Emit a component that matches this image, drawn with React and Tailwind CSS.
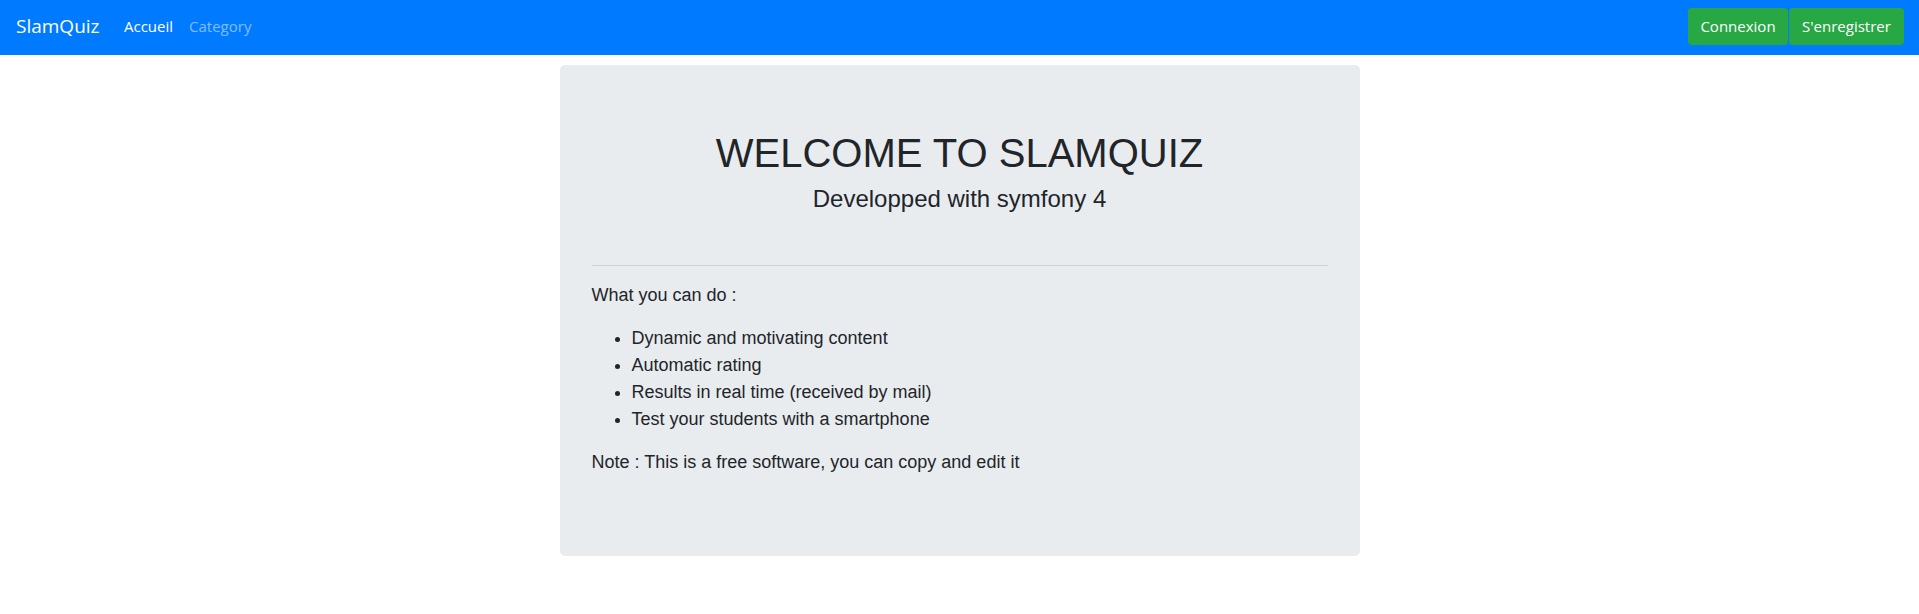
import React from "react";

const features = [
  "Dynamic and motivating content",
  "Automatic rating",
  "Results in real time (received by mail)",
  "Test your students with a smartphone",
];

const App = () => {
  return (
    <div className="min-h-[614px] bg-white text-[#212529] font-['Liberation_Sans',Arial,sans-serif]">
      <nav className="h-[55px] bg-[#007bff] flex items-start pl-4 pr-[15px] pt-2 font-['Segoe_UI','Open_Sans',sans-serif]">
        <a className="w-[100px] h-[37px] flex items-center text-[19px] text-white whitespace-nowrap">
          SlamQuiz
        </a>
        <div className="flex h-[37px] items-center text-[15px]">
          <a className="px-2 text-white">Accueil</a>
          <a className="px-2 text-white/50">Category</a>
        </div>
        <div className="ml-auto flex gap-px">
          <button className="w-[100px] h-[37px] rounded bg-[#28a745] text-white text-[15px]">
            Connexion
          </button>
          <button className="w-[115px] h-[37px] rounded bg-[#28a745] text-white text-[15px]">
            S'enregistrer
          </button>
        </div>
      </nav>

      <div className="w-[800px] mx-auto mt-[10px] bg-[#e9ecef] rounded-[5px] px-8 py-16">
        <h1 className="text-center text-[40px] leading-[1.2] mb-2">
          WELCOME TO SLAMQUIZ
        </h1>
        <h4 className="text-center text-[24px] leading-[1.2] mb-2">
          Developped with symfony 4
        </h4>
        <hr className="mt-[51px] mb-4 border-t border-[#d1d4d7]" />
        <div className="text-[18px] leading-[1.5]">
          <p className="mb-4">What you can do :</p>
          <ul className="list-disc pl-10 mb-4">
            {features.map((f) => (
              <li key={f}>{f}</li>
            ))}
          </ul>
          <p className="mb-4">Note : This is a free software, you can copy and edit it</p>
        </div>
      </div>
    </div>
  );
};

export default App;
